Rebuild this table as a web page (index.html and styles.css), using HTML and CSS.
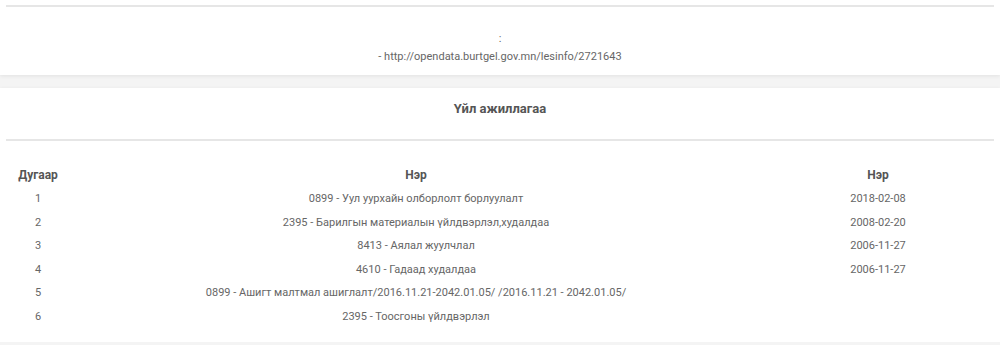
FILE: index.html
```html
<!DOCTYPE html>
<html>
<head>
<meta charset="utf-8">
<link rel="stylesheet" href="styles.css">
</head>
<body>
<div class="card card-top">
  <hr class="rule">
  <div class="info">
    <div class="info-line">:</div>
    <div class="info-line">- http://opendata.burtgel.gov.mn/lesinfo/2721643</div>
  </div>
</div>
<div class="card card-main">
  <h3 class="title">Үйл ажиллагаа</h3>
  <hr class="rule">
  <table class="grid">
    <thead>
      <tr><th class="c1">Дугаар</th><th class="c2">Нэр</th><th class="c3">Нэр</th></tr>
    </thead>
    <tbody>
      <tr><td>1</td><td>0899 - Уул уурхайн олборлолт борлуулалт</td><td>2018-02-08</td></tr>
      <tr><td>2</td><td>2395 - Барилгын материалын үйлдвэрлэл,худалдаа</td><td>2008-02-20</td></tr>
      <tr><td>3</td><td>8413 - Аялал жуулчлал</td><td>2006-11-27</td></tr>
      <tr><td>4</td><td>4610 - Гадаад худалдаа</td><td>2006-11-27</td></tr>
      <tr><td>5</td><td>0899 - Ашигт малтмал ашиглалт/2016.11.21-2042.01.05/ /2016.11.21 - 2042.01.05/</td><td></td></tr>
      <tr><td>6</td><td>2395 - Тоосгоны үйлдвэрлэл</td><td></td></tr>
    </tbody>
  </table>
</div>
</body>
</html>
```
FILE: styles.css
```css
html, body {
  margin: 0;
  padding: 0;
}
body {
  background: #f4f4f4;
  font-family: Roboto, "Noto Sans", sans-serif;
  font-size: 11px;
  color: #666;
}
.card {
  background: #fff;
  box-shadow: 0 1px 4px rgba(0,0,0,0.08);
}
.card-top {
  height: 75px;
  padding: 5px 6px 0 6px;
  box-sizing: border-box;
  margin-bottom: 13px;
}
.rule {
  border: 0;
  border-top: 2px solid #e6e6e6;
  margin: 0;
}
.info {
  text-align: center;
  padding-top: 23px;
  line-height: 18px;
}
.card-main {
  padding: 0 6px;
  height: 254px;
}
.title {
  margin: 0;
  text-align: center;
  font-size: 13px;
  font-weight: 700;
  color: #555;
  height: 51px;
  line-height: 16px;
  box-sizing: border-box;
  padding-top: 13px;
}
.grid {
  width: 100%;
  border-collapse: collapse;
  margin-top: 22px;
}
.grid th {
  font-size: 12px;
  font-weight: 700;
  color: #555;
  height: 24px;
  padding: 0;
}
.grid td {
  text-align: center;
  height: 23.5px;
  padding: 0;
}
.c1 { width: 64px; }
.c3 { width: 232px; }
```
